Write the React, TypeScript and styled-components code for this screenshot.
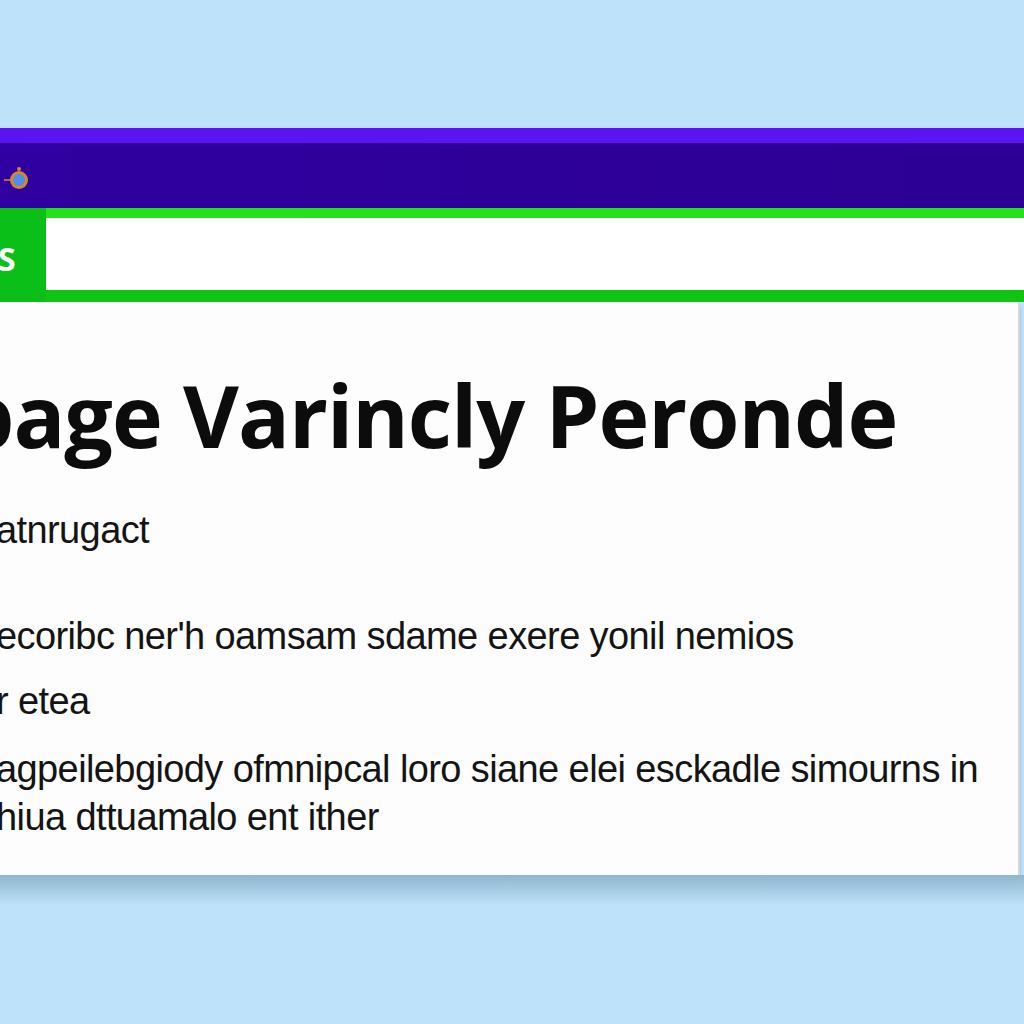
import styled, { createGlobalStyle } from "styled-components";

const GlobalStyle = createGlobalStyle`
    html, body {
        margin: 0;
        padding: 0;
        background: #bde2f9;
    }
    body {
        font-family: "Liberation Sans", Arial, sans-serif;
    }
`;

const Page = styled.div`
    width: 1024px;
    height: 1024px;
    background: #bde2f9;
    padding-top: 128px;
    box-sizing: border-box;
    overflow: hidden;
`;

const Window = styled.div`
    width: 1024px;
    display: flex;
    flex-direction: column;
`;

const TitleBar = styled.div`
    height: 80px;
    background: linear-gradient(90deg, #3000a0, #2c0094);
    border-top: 15px solid #5a14f2;
    box-sizing: border-box;
    display: flex;
    align-items: center;
    padding: 8px 0 0 4px;
`;

const Toolbar = styled.div`
    height: 94px;
    display: flex;
    background: #12c81a;
`;

const Tab = styled.div`
    width: 46px;
    background: #09bf18;
    display: flex;
    align-items: center;
    color: #fff;
    font-family: "Open Sans", sans-serif;
    font-weight: 700;
    font-size: 32px;
    text-indent: -2px;
    padding-top: 6px;
    box-sizing: border-box;
    overflow: hidden;
`;

const Address = styled.div`
    flex: 1;
    background: #fff;
    border-top: 10px solid #24e11c;
    border-bottom: 12px solid #0fc512;
`;

const Content = styled.div`
    width: 1020px;
    height: 573px;
    background: #fdfdfd;
    border-right: 2px solid #d8d8d8;
    box-shadow: 0 4px 3px -1px #4a6e84;
    box-sizing: border-box;
    overflow: hidden;
    padding-top: 63px;
    color: #111;
`;

const Heading = styled.h1`
    margin: 0;
    font-family: "Open Sans", sans-serif;
    font-weight: 700;
    font-size: 86px;
    line-height: 100px;
    letter-spacing: -1px;
    text-indent: -40px;
    white-space: nowrap;
    color: #0c0c0c;
`;

const Line = styled.p<{ $gap: number }>`
    margin: ${(p) => p.$gap}px 0 0 0;
    font-family: "Liberation Sans", Arial, sans-serif;
    font-size: 38px;
    line-height: 48px;
    letter-spacing: -0.6px;
    white-space: nowrap;
    text-indent: -4px;
    color: #141414;
`;

const Shadow = styled.div`
    height: 30px;
    background: linear-gradient(#8fb6cf, #bde2f9);
`;

function Gear() {
    return (
        <svg width="30" height="30" viewBox="0 0 30 30">
            <line x1="0" y1="15" x2="8" y2="15" stroke="#c68a3a" strokeWidth="1.5" />
            <circle cx="15" cy="15" r="9" fill="#d0892c" />
            <circle cx="15" cy="15" r="6" fill="#4f8fe8" />
            <circle cx="15" cy="4" r="2" fill="#d0892c" />
        </svg>
    );
}

export default function App() {
    return (
        <Page>
            <GlobalStyle />
            <Window>
                <TitleBar>
                    <Gear />
                </TitleBar>
                <Toolbar>
                    <Tab>S</Tab>
                    <Address />
                </Toolbar>
                <Content>
                    <Heading>bage Varincly Peronde</Heading>
                    <Line $gap={41}>atnrugact</Line>
                    <Line $gap={58}>ecoribc ner'h oamsam sdame exere yonil nemios</Line>
                    <Line $gap={17}>r etea</Line>
                    <Line $gap={20}>agpeilebgiody ofmnipcal loro siane elei esckadle simourns in</Line>
                    <Line $gap={0}>hiua dttuamalo ent ither</Line>
                </Content>
                <Shadow />
            </Window>
        </Page>
    );
}
